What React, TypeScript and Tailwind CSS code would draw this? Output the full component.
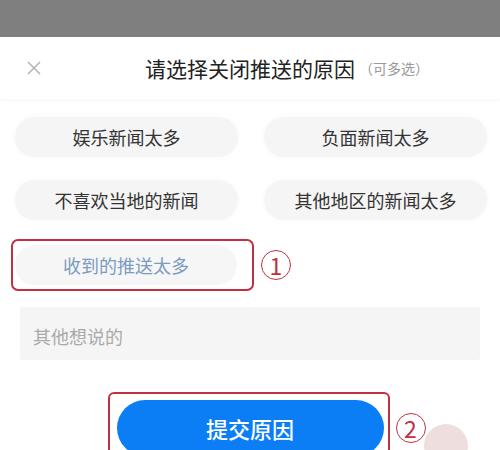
const reasons = [
  "娱乐新闻太多",
  "负面新闻太多",
  "不喜欢当地的新闻",
  "其他地区的新闻太多",
];

function Marker({ n }: { n: string }) {
  return (
    <span className="flex h-[30px] w-[30px] shrink-0 items-center justify-center rounded-full border-[1.5px] border-[#c2303f] text-[23px] leading-none text-[#c2303f]">
      {n}
    </span>
  );
}

export default function App() {
  return (
    <div
      className="relative h-[450px] w-[500px] overflow-hidden bg-white"
      style={{ fontFamily: '"Noto Sans CJK SC", "Noto Sans", sans-serif' }}
    >
      <div className="h-[37px] bg-[#7f7f7f]" />

      {/* sheet header */}
      <div className="grid h-[62px] grid-cols-[1fr_auto_1fr] items-center shadow-[0_2px_3px_rgba(0,0,0,0.03)]">
        <div className="pl-[27px]">
          <svg width="14" height="14" viewBox="0 0 14 14" fill="none">
            <path d="M1 1L13 13M13 1L1 13" stroke="#b3b3b3" strokeWidth="1.5" />
          </svg>
        </div>
        <h1 className="text-[21px] font-normal leading-none text-[#222]">请选择关闭推送的原因</h1>
        <span className="pl-[4px] text-[14px] leading-none text-[#999]">（可多选）</span>
      </div>

      <div className="grid grid-cols-2 gap-x-[26px] gap-y-[23px] pl-[15px] pr-[13px] pt-[18px]">
        {reasons.map((r) => (
          <div
            key={r}
            className="flex h-[40px] items-center justify-center rounded-full bg-[#f5f5f5] text-[18px] leading-none text-[#333] shadow-[0_0_6px_rgba(0,0,0,0.03)]"
          >
            {r}
          </div>
        ))}
      </div>

      <div className="mt-[25px] flex items-center pl-[15px]">
        <div className="relative">
          <div className="flex h-[40px] w-[222px] items-center justify-center rounded-full bg-[#f6f6f6] text-[18px] leading-none text-[#7b9bc0]">
            收到的推送太多
          </div>
          <div className="pointer-events-none absolute -bottom-[6px] -left-[4px] -right-[17px] -top-[6px] rounded-[7px] border-2 border-[#c2303f]" />
        </div>
        <div className="ml-[24px]">
          <Marker n="1" />
        </div>
      </div>

      <div className="mx-[20px] mt-[22px] h-[53px] rounded-[3px] bg-[#f5f5f5] pl-[13px] pt-[20px] text-[18px] leading-none text-[#aaa]">
        其他想说的
      </div>

      <div className="mt-[40px] flex justify-center">
        <div className="relative">
          <div className="pointer-events-none absolute -left-[9px] -right-[6px] -top-[8px] h-[80px] rounded-[6px] border-2 border-[#c2303f]" />
          <button className="flex h-[56px] w-[267px] items-center justify-center rounded-full bg-[#0b7ef6] text-[22px] font-medium leading-none text-white">
            提交原因
          </button>
          <div className="absolute left-[279px] top-[13px]">
            <Marker n="2" />
          </div>
          <div className="absolute left-[307px] top-[24px] h-[44px] w-[44px] rounded-full bg-[#efdede]" />
        </div>
      </div>
    </div>
  );
}
